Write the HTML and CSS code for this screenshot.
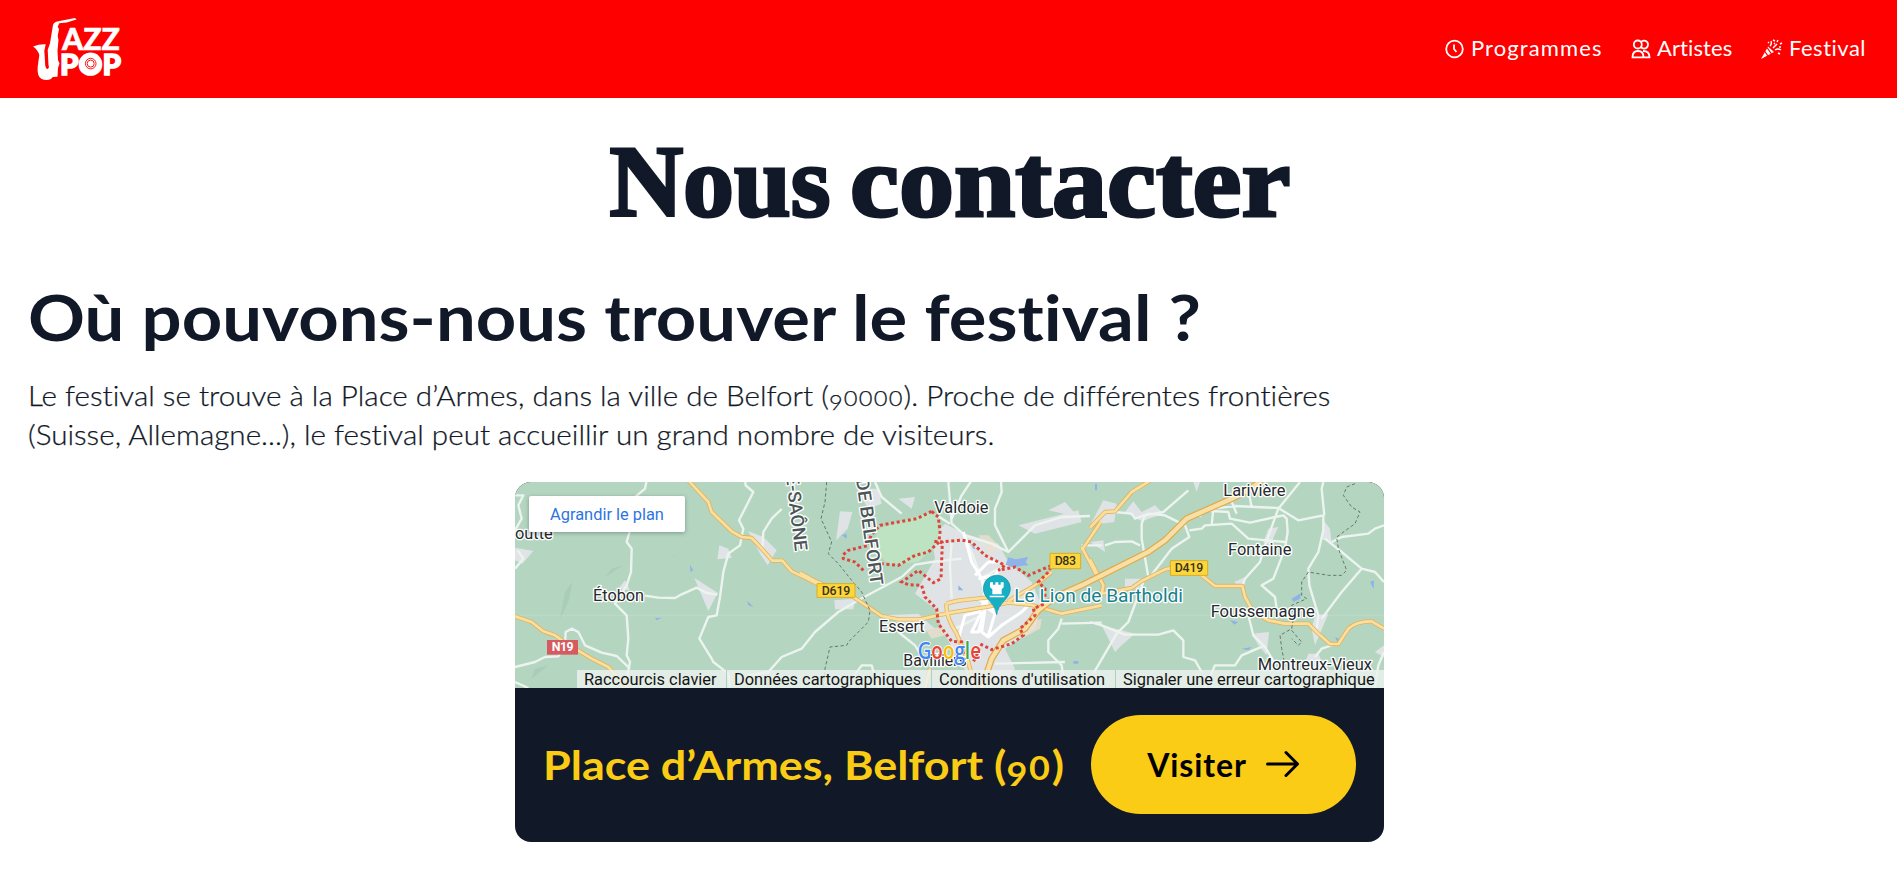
FILE: index.html
```html
<!DOCTYPE html>
<html lang="fr">
<head>
<meta charset="utf-8">
<title>Jazz Pop - Nous contacter</title>
<link rel="stylesheet" href="styles.css">
</head>
<body>
<header class="header">
  <a class="logo" aria-label="Jazz Pop">
    <svg width="92" height="66" viewBox="0 0 92 66">
      <path class="sax" d="M0 30.500Q6 28 12.700 28.300L11.300 35L12 45Q12 53 14.500 53Q16.500 52.500 15.500 49L14.700 34L17 27.300L19.700 10.700Q20 6.500 24 5.500L42 2L43.500 3.500L33.700 6.500L26.300 7.300L24.700 10.700L26 13L24.700 20L25.500 24L24.500 35L25 44L26.500 47.500L25 52L24.500 60.700L19.700 61Q18 64 13.700 64Q7 64 5.300 59Q4.200 55 4.700 50.700L6.300 39Q5 34 0 30.500Z"/>
      <text class="logo-text" x="29" y="33.500" textLength="58" lengthAdjust="spacingAndGlyphs">AZZ</text>
      <text class="logo-text pop" x="27" y="58.500" textLength="61" lengthAdjust="spacingAndGlyphs">POP</text>
      <circle class="disc" cx="57.700" cy="47.600" r="11"/>
      <circle class="groove" cx="57.700" cy="47.600" r="5.300"/>
      <circle class="groove" cx="57.700" cy="47.600" r="3.500"/>
    </svg>
  </a>
  <nav class="nav">
    <a class="nav-link">
      <svg class="icon" width="20" height="20" viewBox="0 0 20 20"><circle cx="9.500" cy="10" r="8.300"/><path d="M9 5.500V10L11.500 13"/></svg>
      <span class="t-prog">Programmes</span>
    </a>
    <a class="nav-link">
      <svg class="icon" width="20" height="20" viewBox="0 0 20 20"><circle cx="6.800" cy="5.500" r="4"/><path d="M10 3A4 4 0 1 1 10 8.200M1.500 18.300Q1.500 12 7 12Q12.500 12 12.500 18.300ZM12 12Q18.500 12 18.500 18.300H12.500"/></svg>
      <span class="t-art">Artistes</span>
    </a>
    <a class="nav-link">
      <svg class="icon party" width="22" height="22" viewBox="0 0 22 22"><path class="solid" d="M0 21L7 8.500L13 14Z"/><path class="stripe" d="M3.500 13L7 18M6 9.500L10.500 16"/><path class="confetti" d="M9 8Q11 6 10 3M12 10L16 6M14 12Q17 10 20 12M12 2L14 3M17 2L16 4M19 6L21 5M18 9L20 9M17 15L19 16M13 6L14 5M7 4L8 5"/></svg>
      <span class="t-fest">Festival</span>
    </a>
  </nav>
</header>
<main class="main">
  <h1 class="title"><span>Nous</span> <span class="wide">contacter</span></h1>
  <h2 class="subtitle">Où pouvons-nous trouver le festival ?</h2>
  <p class="intro">Le festival se trouve à la Place d’Armes, dans la ville de Belfort (<span class="old nine">9</span><span class="old">0000</span>). Proche de différentes frontières<br>(Suisse, Allemagne...), le festival peut accueillir un grand nombre de visiteurs.</p>
  <section class="card">
    <div class="map">
      <svg class="map-art" width="869" height="206" viewBox="0 0 2607 618">
        <defs>
          <g id="yellow-roads">
            <path d="M520 -5L580 60L590 90L650 148L680 165L710 168L740 200L772 236L802 236L830 268L870 287L925 315M0 403L50 420L85 448L120 460L155 485L230 530L280 555L340 620"/>
            <path d="M855 272L900 297L1015 345L1060 375L1100 402L1150 412L1215 412L1295 394L1420 374L1480 362L1550 369L1640 395L1760 370M1295 365Q1290 400 1325 455L1360 540L1380 618M1295 364L1330 356L1420 346M1245 560L1230 618M1480 357L1560 310L1610 270M1700 205L1757 121M1700 195L1745 280"/>
            <path d="M1725 137L1770 90L1800 88L1850 30L1905 -4M1725 232L1765 310L1760 335L1850 318L1880 297L1950 262L1975 257M2050 272L2100 312L2182 312L2190 345L2215 390L2260 415L2310 425L2380 425L2405 450L2445 486L2470 486L2500 440Q2525 417 2570 418L2607 440"/>
          </g>
          <path id="motorway" d="M1400 618L1430 530L1465 475L1530 440L1570 385L1620 345L1700 310L1760 280L1900 210L1950 175L2015 110L2150 50L2200 25L2240 -5"/>
        </defs>
        <rect width="2607" height="618" fill="#b4d6c1"/>
        <path class="shade" d="M135 410L150 330L172 300L160 360ZM50 590L60 560L100 550ZM270 285L290 260L325 250Z"/>
        <g class="urban">
          <path d="M0 197L55 207L22 245L0 235ZM613 190L607 232L650 228L640 200ZM700 148L745 165L785 205L758 250L735 215ZM538 288L608 332L580 387L560 340ZM310 320L330 295L345 325Z"/>
          <path d="M975 88L1012 90L998 140L963 175ZM1025 20L1090 20L1100 65L1060 80ZM958 355L1020 350L1015 382L960 382ZM1150 50L1200 45L1190 80ZM1110 400L1210 395L1260 440L1200 450ZM1200 335L1260 230L1250 170L1290 125L1350 155L1450 185L1480 240L1550 300L1580 370L1560 440L1470 500L1500 560L1470 600L1370 600L1320 510L1290 460L1260 380ZM1510 130L1690 85L1700 120L1560 155ZM1600 85L1650 60L1690 105Z"/>
          <path d="M1765 55L1805 65L1798 120L1725 130ZM1830 90L1855 58L1880 90L1920 70L1945 95L1880 118ZM1725 180L1765 175L1770 210ZM2260 140L2290 135L2265 190L2245 180ZM2425 115L2445 140L2450 182L2418 170ZM1830 290L1890 290L1870 320L1830 315ZM1760 430L1860 455L1820 490L1800 510ZM2210 455L2262 450L2255 520L2230 490ZM2400 400L2440 395L2400 490L2390 440ZM2035 0L2055 0L2045 30ZM2157 300L2190 285L2180 320ZM2380 515L2410 515L2430 560L2360 570ZM2580 510L2607 490L2607 525Z"/>
        </g>
        <path fill="#ecdfd0" opacity=".8" d="M1390 160L1420 160L1450 190L1430 220ZM1230 440L1290 435L1290 460L1250 470ZM1520 430L1580 410L1575 440L1520 470Z"/>
        <path fill="#bee3c3" d="M1095 138L1235 93L1270 98L1270 180L1210 240L1120 248L1070 190Z"/>
        <path fill="#8fb2e8" d="M468 213L485 227L478 222ZM525 248L535 265L526 270ZM697 357L716 375L700 370ZM420 408L440 407L425 415ZM1480 226L1502 232L1540 225L1532 240L1540 250L1490 255L1472 248ZM1330 310L1345 325L1330 325ZM2330 350L2358 333L2355 350L2335 360ZM2145 415L2170 420L2158 428ZM2180 500L2210 495L2200 505ZM2565 300L2577 295L2576 322ZM1740 5H1746V25H1740ZM980 160L995 155L995 170ZM1365 182L1382 200L1375 200ZM2460 465L2472 470L2468 482ZM1675 537H1690V545H1675Z"/>
        <g class="white-roads">
          <path d="M395 -5L390 20L355 50L345 145L335 180L350 200L348 270L335 310L300 365L335 400L340 470L335 520L345 540L335 590M0 555L60 540L90 525L130 523L150 485L152 450L170 440L190 450L210 490L260 512L305 522L345 560M390 341L430 347L480 348L500 337L545 317L575 333L607 338M690 -5L692 10L715 30L672 115L685 140L675 190L640 215L625 270L615 345L605 400L580 405L553 470L590 530L595 540L640 575L645 618M800 81L770 110L745 150L742 200M700 580L760 570L800 525L860 500L900 450L970 390L1035 352L1160 285L1200 248L1250 240L1340 230M0 40L25 40L10 70L20 110L0 145M0 600L40 618M0 260L25 230L8 205"/>
          <path d="M1080 0L1100 45L1160 95M1300 0L1305 60L1310 125L1350 160L1385 250L1400 290L1450 350M1305 125L1265 100M1370 -5L1340 40L1310 110M1350 160L1430 185L1480 210L1560 130L1640 105L1725 102M1480 210L1440 130L1440 80L1460 30L1458 0M1320 440L1400 400L1420 350M1310 180L1305 250L1310 350M1395 290L1450 260M1150 450L1200 490L1225 530M990 618L1040 550L1070 550L1090 618M1640 410L1630 440L1600 475L1600 510L1640 550L1650 618M1640 425L1760 422M1440 545L1650 540M1700 190L1760 190"/>
          <path class="town" d="M1345 150L1370 240L1400 290L1415 365L1390 390L1350 400L1330 470M1380 280L1420 240L1450 240M1390 290L1440 280L1450 265M1400 390L1370 450L1390 450L1410 380L1400 450L1420 465L1460 430L1520 390L1540 370M1400 365L1440 395L1420 460M1390 350L1450 390"/>
          <path d="M2020 25L1945 90L1890 100L1880 125L1880 170L1900 285M1800 90L1850 95L1860 110L1900 95L1950 100L2010 130L2023 165L1970 200L1905 285M1770 190L1800 180L1850 178L1875 190M2055 105L2060 85L2140 90L2145 110L2205 122L2280 105L2305 100L2315 110L2318 150L2310 200L2275 290L2240 310L2280 345L2285 380M2023 145L2060 140L2070 130L2150 125L2200 170L2310 180M2090 130L2095 80L2160 72L2290 78L2350 115L2425 100L2425 145L2410 210L2380 260L2383 310L2410 400L2405 440M2200 25L2210 75M2150 60L2165 95M2355 0L2290 80L2250 190L2235 240L2190 290L2180 320M2428 100L2420 20L2425 0M2430 170L2480 210L2540 260L2580 270L2607 300M2450 180L2480 165L2560 155L2580 140L2607 130M2540 260L2480 330L2420 410M1885 300L1840 420L1805 455L1735 575M1725 420L1760 430L1830 458L1930 458L1975 445L2005 475L2005 525L2040 535L2060 570M2200 400L2215 460L2250 495L2280 545M2250 490L2180 520L2160 550L2100 550L2070 618M2400 525L2420 500L2480 480M2607 510L2590 550L2580 618"/>
        </g>
        <use href="#yellow-roads" class="casing"/><use href="#yellow-roads" class="fill"/>
        <use href="#motorway" class="mcasing"/><use href="#motorway" class="mfill"/>
        <g class="border">
          <path d="M935 0L930 60L918 110L950 180L940 215L970 245L1010 295L1040 330L1065 385L1060 420L1000 480L995 490L945 495L930 560L925 618"/>
          <path d="M2520 5L2495 15L2485 40L2510 75L2535 90L2520 125L2465 165L2470 200L2495 265L2480 280L2440 280L2380 270L2360 300L2360 340L2375 350L2330 370L2335 410L2330 440L2295 460L2300 500L2310 550M2330 445L2360 480L2350 490L2330 470"/>
        </g>
        <path class="limit" d="M1250 88L1205 110L1150 120L1095 130L1068 160L1060 190L1000 205L983 220L985 230L1020 240L1050 270M1250 88L1270 105L1275 150L1272 180L1240 210L1200 220L1150 250L1100 245M1258 178L1282 182L1278 290L1255 302L1210 265L1160 300L1180 308L1220 310L1230 345L1265 380L1270 425L1310 478L1340 480L1345 518M1275 180L1340 174L1370 180L1410 220L1450 240L1470 250L1450 265L1500 255L1540 280L1610 250L1600 270L1570 300L1590 320L1590 365L1555 380L1560 400L1515 440L1525 460L1490 485L1430 503L1400 488L1375 540"/>
        <path d="M0 401H2607" stroke="#fff" opacity=".15" stroke-width="2"/>
        <g class="labels">
          <text x="0" y="170" textLength="113" lengthAdjust="spacingAndGlyphs">outte</text>
          <text x="234" y="358" textLength="153" lengthAdjust="spacingAndGlyphs">Étobon</text>
          <text x="1258" y="94" textLength="162" lengthAdjust="spacingAndGlyphs">Valdoie</text>
          <text x="1092" y="449" textLength="137" lengthAdjust="spacingAndGlyphs">Essert</text>
          <text x="1165" y="552" textLength="190" lengthAdjust="spacingAndGlyphs">Bavilliers</text>
          <text x="2125" y="43" textLength="186" lengthAdjust="spacingAndGlyphs">Larivière</text>
          <text x="2139" y="220" textLength="190" lengthAdjust="spacingAndGlyphs">Fontaine</text>
          <text x="2087" y="405" textLength="312" lengthAdjust="spacingAndGlyphs">Foussemagne</text>
          <text x="2228" y="563" textLength="343" lengthAdjust="spacingAndGlyphs">Montreux-Vieux</text>
          <text class="region" transform="translate(812 -20) rotate(83)" textLength="230" lengthAdjust="spacingAndGlyphs">E-SAÔNE</text>
          <text class="region" transform="translate(1023 -8) rotate(82)" textLength="322" lengthAdjust="spacingAndGlyphs">DE BELFORT</text>
          <text class="place" x="1498" y="361" textLength="506" lengthAdjust="spacingAndGlyphs">Le Lion de Bartholdi</text>
        </g>
        <g class="shields">
          <path d="M906 305H1020V346H906ZM1605 214H1697V260H1605ZM1966 236H2078V280H1966Z"/>
          <rect class="red" x="96" y="474" width="93" height="44"/>
          <text x="963" y="339" textLength="86">D619</text>
          <text x="1651" y="250" textLength="64">D83</text>
          <text x="2022" y="271" textLength="86">D419</text>
          <text class="n19" x="143" y="508" textLength="66">N19</text>
        </g>
        <path class="pin" d="M1445 398Q1442 376 1425 358Q1405 338 1405 320A40 40 0 0 1 1486 320Q1486 338 1466 358Q1448 376 1445 398Z"/>
        <path fill="#fff" d="M1425 301H1434V308H1441V301H1450V308H1457V301H1466V316L1460 322V337H1432V322L1425 316ZM1424 341H1468V346H1424Z"/>
        <text class="google" x="1208" y="532" textLength="190" lengthAdjust="spacingAndGlyphs"><tspan fill="#4285f4">G</tspan><tspan fill="#ea4335">o</tspan><tspan fill="#fbbc04">o</tspan><tspan fill="#4285f4">g</tspan><tspan fill="#34a853">l</tspan><tspan fill="#ea4335">e</tspan></text>
      </svg>
      <a class="enlarge">Agrandir le plan</a>
      <div class="legal"><span class="l1">Raccourcis clavier</span><span class="l2">Données cartographiques</span><span class="l3">Conditions d'utilisation</span><span class="l4">Signaler une erreur cartographique</span></div>
    </div>
    <div class="card-footer">
      <p class="address">Place d’Armes, Belfort (<span class="old nine">9</span><span class="old">0</span>)</p>
      <a class="button"><span class="visit">Visiter</span><svg width="34" height="28" viewBox="0 0 34 28"><path d="M1.500 14H31M20 2.500L31.500 14L20 25.500"/></svg></a>
    </div>
  </section>
</main>
</body>
</html>
```
FILE: styles.css
```css
* { box-sizing: border-box; }
body { margin: 0; background: #fff; color: #111827; font-family: Lato, "Open Sans", sans-serif; font-variant-ligatures: none; overflow: hidden; }
.header { height: 98px; padding: 0 31px 0 33px; display: flex; align-items: center; justify-content: space-between; background: #f00; color: #fff; }
.logo { display: flex; }
.logo svg { overflow: visible; }
.sax, .disc { fill: #fff; }
.groove { fill: none; stroke: #f00; stroke-width: .9; }
.logo-text { font: 900 31px Lato, sans-serif; fill: #fff; stroke: #fff; stroke-width: .5; }
.pop { font-size: 29px; stroke-width: 1.5; }
.nav { display: flex; gap: 28px; margin-bottom: 2px; }
.nav-link { display: flex; align-items: center; gap: 6px; font-size: 22px; line-height: 30px; white-space: nowrap; }
.icon { fill: none; stroke: #fff; stroke-width: 1.8; flex: none; position: relative; top: 1px; }
.icon .solid { fill: #fff; stroke: none; }
.icon .stripe { stroke: #f00; stroke-width: 1.3; }
.icon .confetti { stroke-width: 1.4; }
.t-prog { width: 132px; letter-spacing: 1.1px; }
.t-art { width: 76px; letter-spacing: .1px; }
.t-fest { width: 77px; letter-spacing: .5px; }
.main { padding: 0 28px; }
.title { margin: 24px 0 0 3px; display: flex; justify-content: center; gap: 19px; font: 700 102px/120px "Liberation Serif", serif; -webkit-text-stroke: 3px #111827; }
.title .wide { width: 441px; transform: scaleX(1.08); transform-origin: left; }
.subtitle { margin: 37px 0 0; width: 1064px; font-size: 64px; line-height: 76px; font-weight: 700; white-space: nowrap; transform: scaleX(1.103); transform-origin: left; }
.intro { margin: 21px 0 0; width: 1250px; font-size: 28px; line-height: 39px; font-weight: 300; white-space: nowrap; -webkit-text-stroke: .25px #111827; transform: scaleX(1.058); transform-origin: left; }
.old { font-size: .8em; line-height: 0; letter-spacing: .05em; }
.nine { vertical-align: -.2em; }
.card { width: 869px; height: 360px; margin: 28px auto 0; border-radius: 16px; overflow: hidden; background: #111827; position: relative; left: 1px; }
.map { position: relative; height: 206px; overflow: hidden; }
.map-art { display: block; }
.shade { fill: #a9cdb7; }
.urban { fill: #e4e5ea; opacity: .9; }
.white-roads { fill: none; stroke: #edf4ef; stroke-width: 7; stroke-linejoin: round; }
.town { stroke: #fff; stroke-width: 9; }
.casing { fill: none; stroke: #e2b25c; stroke-width: 13; stroke-linejoin: round; }
.fill { fill: none; stroke: #fbdf9e; stroke-width: 8; stroke-linejoin: round; }
.mcasing { fill: none; stroke: #dfaa4c; stroke-width: 20; }
.mfill { fill: none; stroke: #f8dfa5; stroke-width: 13; }
.border { fill: none; stroke: #64796d; stroke-width: 3; stroke-dasharray: 10 7; }
.limit { fill: none; stroke: #dd453a; stroke-width: 9; stroke-dasharray: 9 8; }
.labels { font: 400 49px Roboto, sans-serif; fill: #252a2d; stroke: #fff; stroke-width: 8; paint-order: stroke; stroke-linejoin: round; }
.labels .region { font-size: 54px; fill: #4c5658; font-weight: 500; }
.labels .place { font-size: 55px; fill: #16818d; }
.shields { font: 500 37px Roboto, sans-serif; fill: #39321d; text-anchor: middle; }
.shields path { fill: #fdd63c; stroke: #d8ad27; stroke-width: 3; }
.shields .red { fill: #d65b60; }
.shields .n19 { fill: #fff; font-weight: 700; }
.pin { fill: #17afc4; stroke: #108c9d; stroke-width: 2; }
.google { font: 600 68px "Open Sans", Roboto, sans-serif; stroke: #fff; stroke-width: 5; paint-order: stroke; }
.enlarge { position: absolute; left: 14px; top: 14px; width: 156px; height: 36px; background: #fff; border-radius: 2px; box-shadow: 0 1px 4px rgba(0, 0, 0, .3); text-align: center; font: 400 16.4px/37px Roboto, sans-serif; color: #2d75df; }
.legal { position: absolute; right: 0; bottom: 0; height: 18px; width: 807px; display: flex; background: rgba(237, 241, 239, .82); font: 400 16.4px/20px Roboto, sans-serif; color: #151515; white-space: nowrap; overflow: hidden; }
.legal span { padding-left: 7px; border-left: 1px solid #b5cec0; }
.legal .l1 { width: 149px; border: 0; }
.legal .l2 { width: 205px; }
.legal .l3 { width: 184px; }
.legal .l4 { width: 269px; }
.card-footer { height: 154px; padding: 0 28px; display: flex; align-items: center; justify-content: space-between; }
.address { margin: 0; font-size: 40px; line-height: 48px; font-weight: 700; color: #facc15; white-space: nowrap; transform: scaleX(1.123); transform-origin: left; }
.button { width: 265px; height: 99px; border-radius: 50px; background: #facc15; color: #000; display: flex; align-items: center; justify-content: center; gap: 19px; font-size: 32px; font-weight: 700; margin-bottom: 2px; }
.visit { letter-spacing: .9px; }
.button svg { fill: none; stroke: #000; stroke-width: 3; stroke-linecap: round; stroke-linejoin: round; }
```
